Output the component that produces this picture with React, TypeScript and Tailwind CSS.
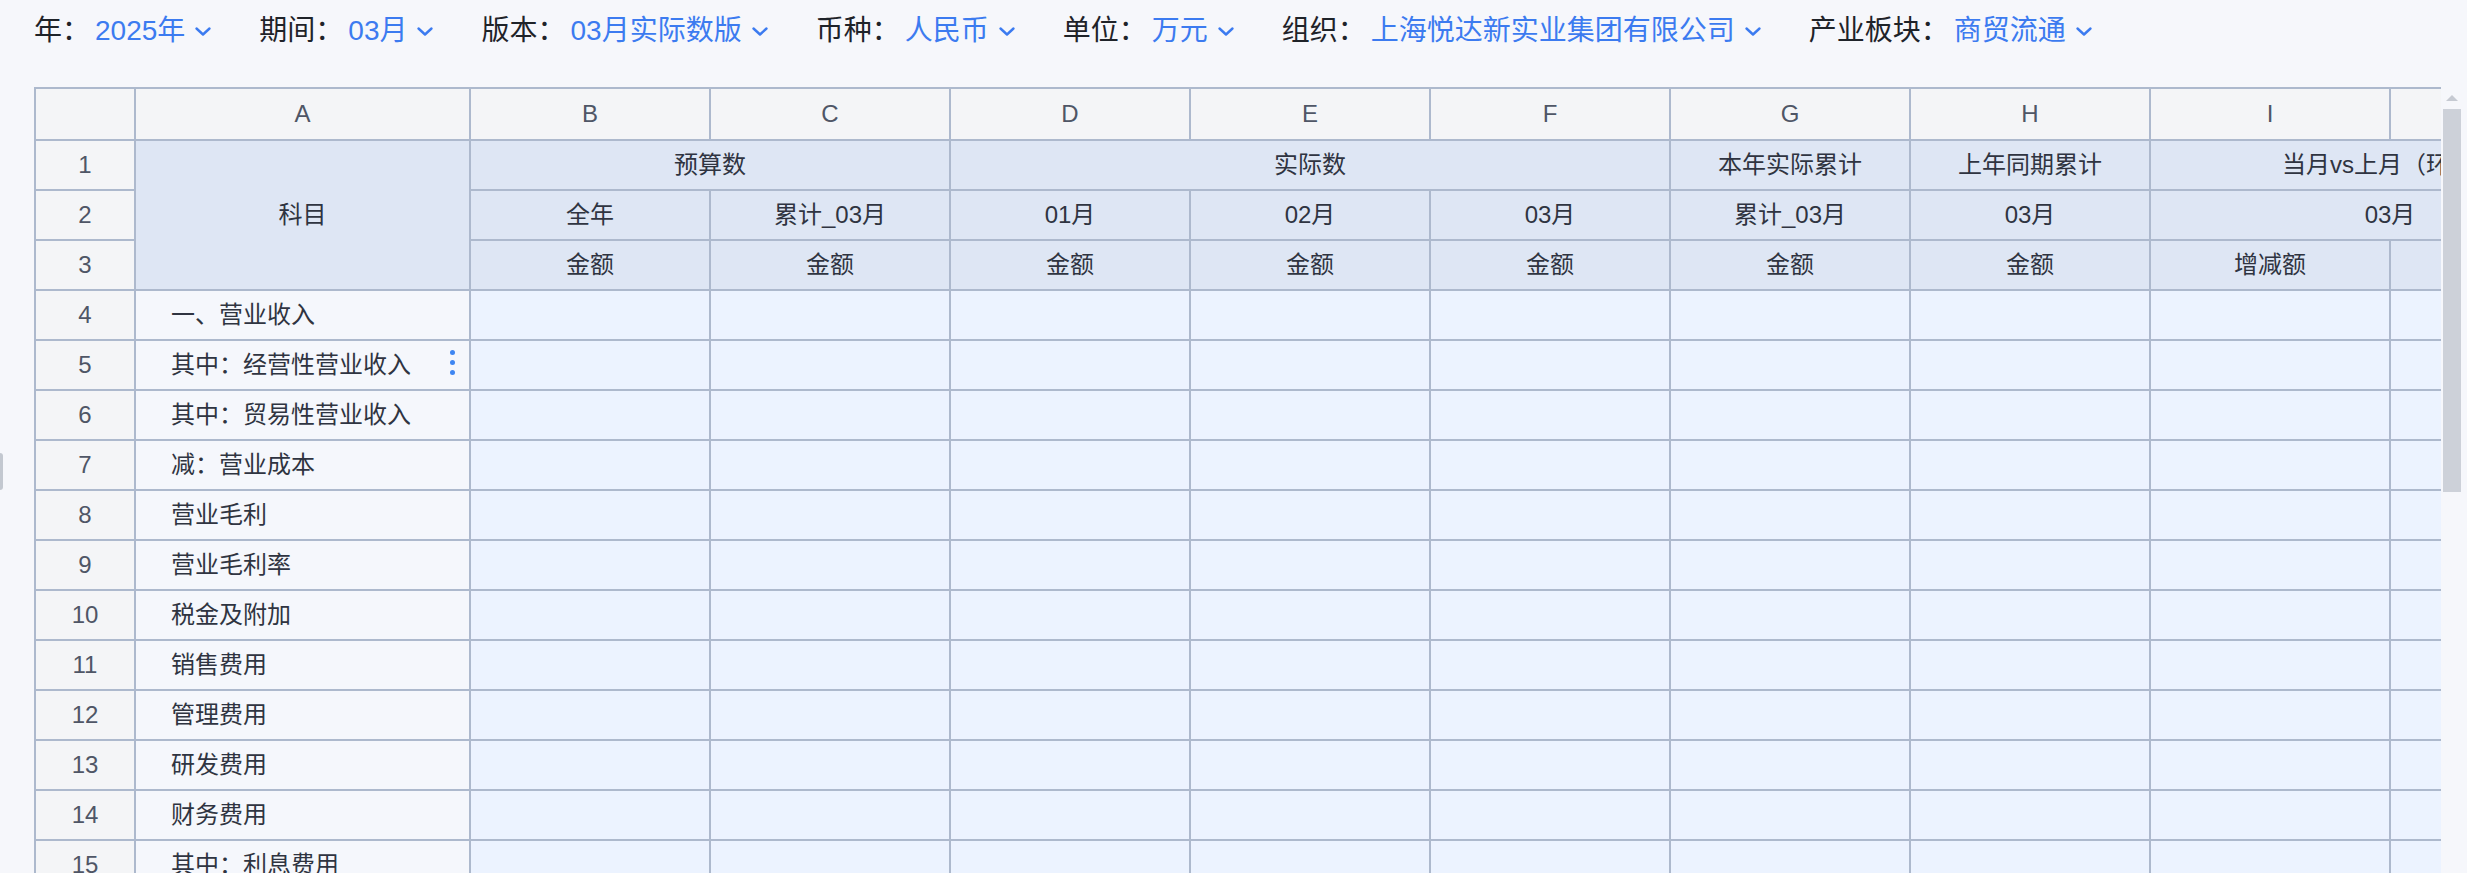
import React from "react";

const FONT = '"Liberation Sans", "Noto Sans CJK SC", sans-serif';

type Filter = { label: string; value: string };

const filters: Filter[] = [
    { label: "年：", value: "2025年" },
    { label: "期间：", value: "03月" },
    { label: "版本：", value: "03月实际数版" },
    { label: "币种：", value: "人民币" },
    { label: "单位：", value: "万元" },
    { label: "组织：", value: "上海悦达新实业集团有限公司" },
    { label: "产业板块：", value: "商贸流通" },
];

const subjects = [
    "一、营业收入",
    "其中：经营性营业收入",
    "其中：贸易性营业收入",
    "减：营业成本",
    "营业毛利",
    "营业毛利率",
    "税金及附加",
    "销售费用",
    "管理费用",
    "研发费用",
    "财务费用",
    "其中：利息费用",
    "利息收入",
    "加：其他收益",
];

const letters = ["A", "B", "C", "D", "E", "F", "G", "H", "I", "J"];

function Chevron() {
    return (
        <svg className="ml-[9px] w-[18px] h-[11px]" viewBox="0 0 18 11" fill="none" stroke="currentColor" strokeWidth="2.4" strokeLinecap="round" strokeLinejoin="round">
            <polyline points="2.5,2.5 9,8.5 15.5,2.5" />
        </svg>
    );
}

function FilterBar() {
    return (
        <div className="flex items-center h-[62px] pl-[34px] gap-[47px] text-[28px] leading-none">
            {filters.map(f => (
                <div key={f.label} className="flex items-center whitespace-nowrap">
                    <span className="text-[#1f2329]">{f.label}</span>
                    <span className="ml-[5px] text-[#3c7bf0]">{f.value}</span>
                    <span className="text-[#3c7bf0]"><Chevron /></span>
                </div>
            ))}
        </div>
    );
}

const headCell = "bg-[#dee6f4] flex items-center justify-center text-[#2f3441] whitespace-nowrap overflow-hidden";
const letterCell = "bg-[#f4f5f7] flex items-center justify-center text-[#4f5666]";
const numCell = "bg-[#f4f5f7] flex items-center justify-center text-[#4f5666]";

function Sheet() {
    return (
        <div className="grid w-max grid-cols-[98px_333px_repeat(9,238px)] grid-rows-[50px_repeat(17,48px)] gap-[2px] p-[2px] bg-[#adb9cd] text-[24px] leading-none">
            {/* column letters */}
            <div className={letterCell}></div>
            {letters.map(l => (
                <div key={l} className={letterCell}>{l}</div>
            ))}

            {/* header row 1 */}
            <div className={numCell}>1</div>
            <div className={`${headCell} row-span-3`}>科目</div>
            <div className={`${headCell} col-span-2`}>预算数</div>
            <div className={`${headCell} col-span-3`}>实际数</div>
            <div className={headCell}>本年实际累计</div>
            <div className={headCell}>上年同期累计</div>
            <div className={`${headCell} col-span-2`}>当月vs上月（环比）</div>

            {/* header row 2 */}
            <div className={numCell}>2</div>
            <div className={headCell}>全年</div>
            <div className={headCell}>累计_03月</div>
            <div className={headCell}>01月</div>
            <div className={headCell}>02月</div>
            <div className={headCell}>03月</div>
            <div className={headCell}>累计_03月</div>
            <div className={headCell}>03月</div>
            <div className={`${headCell} col-span-2`}>03月</div>

            {/* header row 3 */}
            <div className={numCell}>3</div>
            <div className={headCell}>金额</div>
            <div className={headCell}>金额</div>
            <div className={headCell}>金额</div>
            <div className={headCell}>金额</div>
            <div className={headCell}>金额</div>
            <div className={headCell}>金额</div>
            <div className={headCell}>金额</div>
            <div className={headCell}>增减额</div>
            <div className={headCell}>增减率</div>

            {subjects.map((s, i) => (
                <React.Fragment key={s}>
                    <div className={numCell}>{i + 4}</div>
                    <div className="relative bg-[#f5f7fc] flex items-center pl-[35px] text-[#2f3441] whitespace-nowrap">
                        {s}
                        {i === 1 && (
                            <span className="absolute right-[14px] top-[9px] flex flex-col gap-[5px]">
                                <span className="w-[5px] h-[5px] rounded-full bg-[#3f86f2]"></span>
                                <span className="w-[5px] h-[5px] rounded-full bg-[#3f86f2]"></span>
                                <span className="w-[5px] h-[5px] rounded-full bg-[#3f86f2]"></span>
                            </span>
                        )}
                    </div>
                    {letters.slice(1).map(l => (
                        <div key={l} className="bg-[#ecf3ff]"></div>
                    ))}
                </React.Fragment>
            ))}
        </div>
    );
}

export default function App() {
    return (
        <div className="relative h-screen overflow-hidden bg-[#f6f7fb]" style={{ fontFamily: FONT }}>
            <div className="absolute left-0 top-[453px] w-[3px] h-[37px] rounded-r bg-[#c3c8d0]"></div>
            <FilterBar />
            <div className="flex mt-[25px] pl-[34px]">
                <div className="w-[2407px] overflow-hidden">
                    <Sheet />
                </div>
                <div className="ml-[2px] w-[18px] flex flex-col items-center">
                    <div className="h-[22px] flex items-center justify-center">
                        <div className="w-0 h-0 border-l-[6px] border-r-[6px] border-b-[6px] border-l-transparent border-r-transparent border-b-[#c6cad2]"></div>
                    </div>
                    <div className="w-[18px] h-[383px] bg-[#cdd1d9]"></div>
                </div>
            </div>
        </div>
    );
}
